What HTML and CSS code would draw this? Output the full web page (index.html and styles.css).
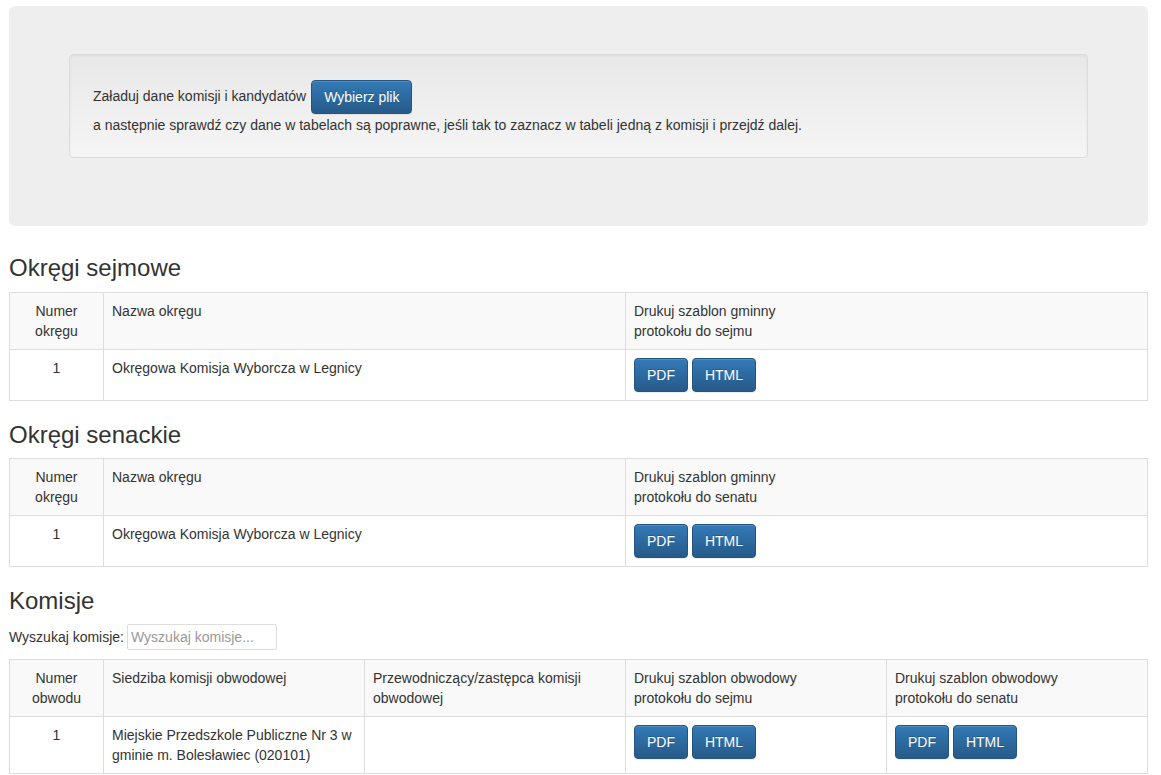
FILE: index.html
```html
<!DOCTYPE html>
<html lang="pl">
<head>
<meta charset="utf-8">
<title>Komisje</title>
<link rel="stylesheet" href="styles.css">
</head>
<body>
<div class="page">
  <div class="jumbotron">
    <div class="well">
      <div class="load-line">Załaduj dane komisji i kandydatów <button class="btn">Wybierz plik</button></div>
      <div class="load-note">a następnie sprawdź czy dane w tabelach są poprawne, jeśli tak to zaznacz w tabeli jedną z komisji i przejdź dalej.</div>
    </div>
  </div>

  <h3 class="heading">Okręgi sejmowe</h3>
  <table class="grid">
    <colgroup><col class="c-num"><col><col></colgroup>
    <thead>
      <tr><td class="center">Numer<br>okręgu</td><td>Nazwa okręgu</td><td>Drukuj szablon gminny<br>protokołu do sejmu</td></tr>
    </thead>
    <tbody>
      <tr><td class="center">1</td><td>Okręgowa Komisja Wyborcza w Legnicy</td><td><button class="btn">PDF</button> <button class="btn">HTML</button></td></tr>
    </tbody>
  </table>

  <h3 class="heading">Okręgi senackie</h3>
  <table class="grid">
    <colgroup><col class="c-num"><col><col></colgroup>
    <thead>
      <tr><td class="center">Numer<br>okręgu</td><td>Nazwa okręgu</td><td>Drukuj szablon gminny<br>protokołu do senatu</td></tr>
    </thead>
    <tbody>
      <tr><td class="center">1</td><td>Okręgowa Komisja Wyborcza w Legnicy</td><td><button class="btn">PDF</button> <button class="btn">HTML</button></td></tr>
    </tbody>
  </table>

  <h3 class="heading">Komisje</h3>
  <div class="search">
    <label class="search-label" for="q">Wyszukaj komisje:</label>
    <input id="q" class="search-input" type="text" placeholder="Wyszukaj komisje...">
  </div>
  <table class="grid">
    <colgroup><col class="c-num"><col><col><col><col></colgroup>
    <thead>
      <tr><td class="center">Numer<br>obwodu</td><td>Siedziba komisji obwodowej</td><td>Przewodniczący/zastępca komisji obwodowej</td><td>Drukuj szablon obwodowy<br>protokołu do sejmu</td><td>Drukuj szablon obwodowy<br>protokołu do senatu</td></tr>
    </thead>
    <tbody>
      <tr><td class="center">1</td><td>Miejskie Przedszkole Publiczne Nr 3 w gminie m. Bolesławiec (020101)</td><td></td><td><button class="btn">PDF</button> <button class="btn">HTML</button></td><td><button class="btn">PDF</button> <button class="btn">HTML</button></td></tr>
    </tbody>
  </table>
</div>
</body>
</html>
```

FILE: styles.css
```css
html, body {
  margin: 0;
  padding: 0;
  background: #fff;
}
body {
  font-family: "Liberation Sans", Arial, Helvetica, sans-serif;
  font-size: 14px;
  line-height: 20px;
  color: #333;
}
.page {
  padding: 6px 13px 0 9px;
}
.jumbotron {
  background: #eee;
  border-radius: 6px;
  padding: 48px 60px;
  margin-bottom: 29px;
}
.well {
  border: 1px solid #dcdcdc;
  border-radius: 4px;
  background-image: linear-gradient(to bottom, #e8e8e8 0, #f5f5f5 100%);
  box-shadow: inset 0 1px 3px rgba(0,0,0,.05), 0 1px 0 rgba(255,255,255,.1);
  padding: 19px 19px 22px 23px;
  margin-bottom: 20px;
}
.load-line {
  line-height: 34px;
  padding-top: 5px;
  margin-bottom: 1px;
}
.btn {
  display: inline-block;
  font-family: inherit;
  font-size: 14px;
  line-height: 20px;
  padding: 6px 12px;
  color: #fff;
  border: 1px solid #245580;
  border-radius: 4px;
  background-image: linear-gradient(to bottom, #337ab7 0, #265a88 100%);
  text-shadow: 0 -1px 0 rgba(0,0,0,.2);
  box-shadow: inset 0 1px 0 rgba(255,255,255,.15), 0 1px 1px rgba(0,0,0,.075);
  vertical-align: middle;
  cursor: pointer;
  margin: 0;
}
.load-line .btn {
  margin-left: 1px;
}
.heading {
  font-family: "Liberation Sans", Arial, Helvetica, sans-serif;
  font-size: 24px;
  font-weight: 500;
  line-height: 1.1;
  margin: 21px 0 10px;
  color: #333;
}
.grid {
  width: 100%;
  table-layout: fixed;
  border-collapse: collapse;
  border: 1px solid #ddd;
  margin-bottom: 20px;
}
.c-num {
  width: 94px;
}
.grid td {
  border: 1px solid #ddd;
  padding: 8px;
  vertical-align: top;
  line-height: 20px;
}
.grid thead td {
  background: #f9f9f9;
}
.grid .center {
  text-align: center;
}
.search {
  display: flex;
  align-items: center;
  gap: 3px;
  margin-bottom: 9px;
}
.search-input {
  width: 150px;
  height: 26px;
  box-sizing: border-box;
  border: 1px solid #ddd;
  border-radius: 2px;
  padding: 2px 3px;
  font-family: inherit;
  font-size: 14px;
  color: #333;
}
.search-input::placeholder {
  color: #999;
}
```
